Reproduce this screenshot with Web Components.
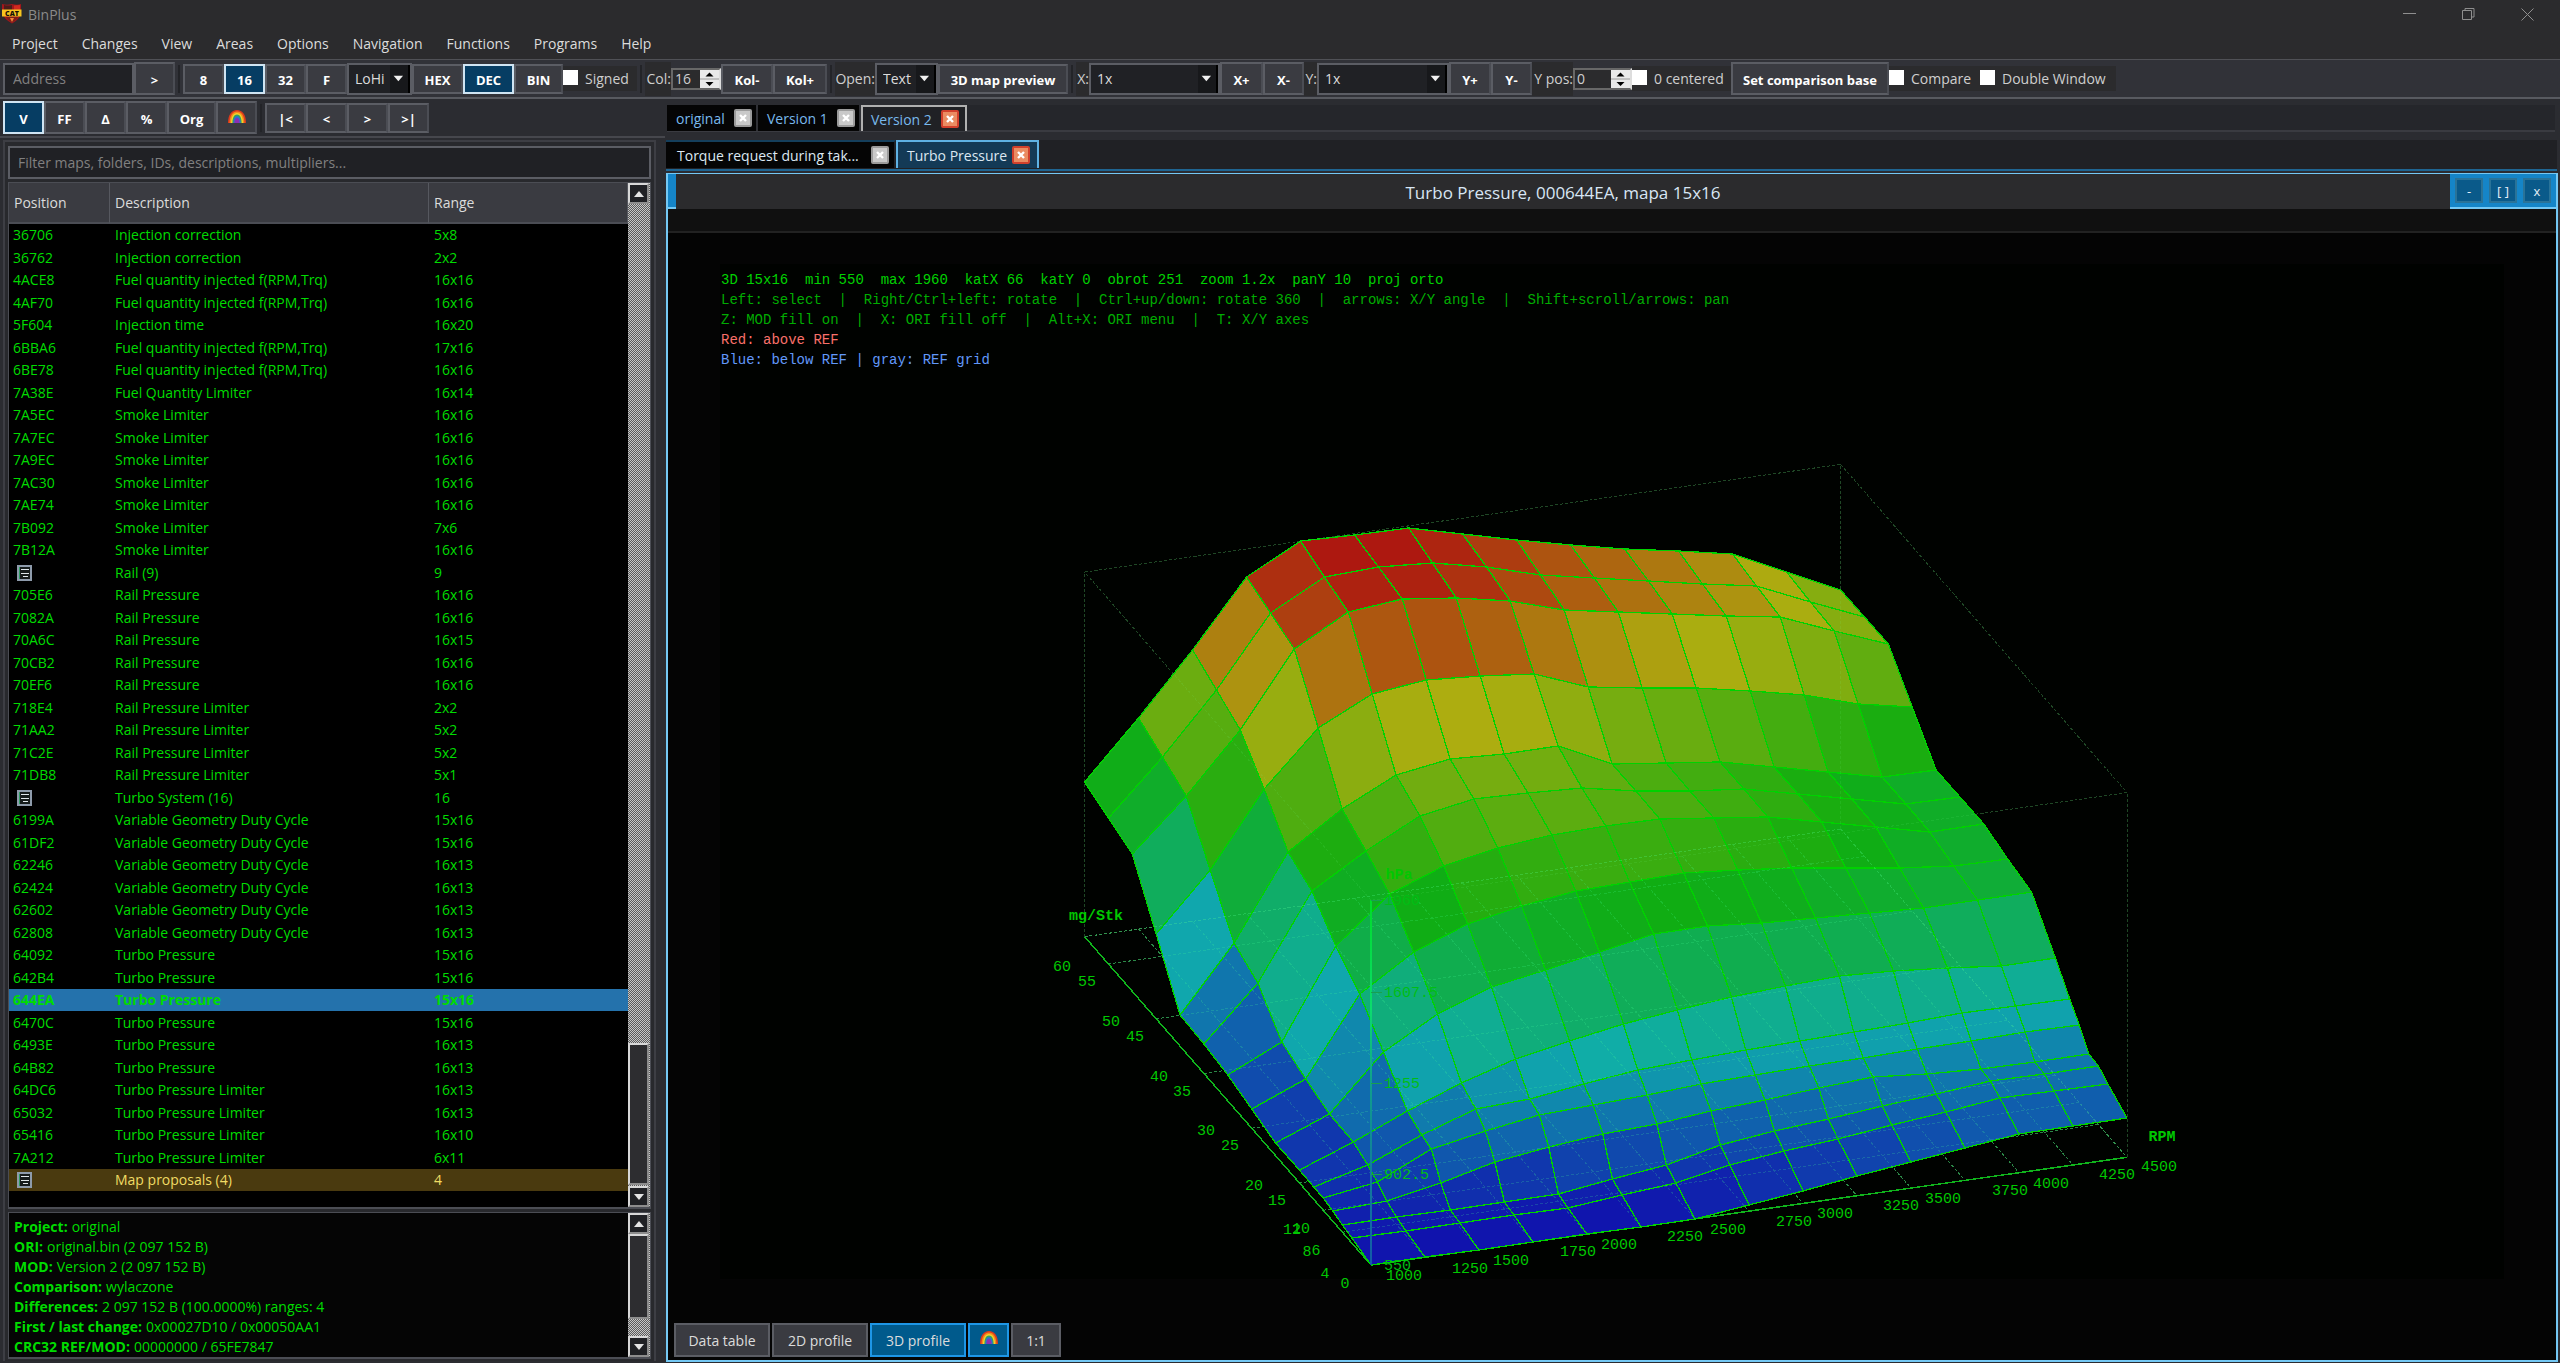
<!DOCTYPE html>
<html lang="en">
<head>
<meta charset="utf-8">
<title>BinPlus</title>
<style>
html,body{margin:0;height:100%;background:#2b2b2d}
body{font-family:"Open Sans","Noto Sans",sans-serif;font-size:14px;color:#dcdcdc;overflow:hidden}
</style>
</head>
<body>
<bin-app></bin-app>
<script>
const define=(name,markup,setup)=>customElements.define(name,class extends HTMLElement{
  connectedCallback(){
    if(this.shadowRoot)return;
    const root=this.attachShadow({mode:'open'});
    root.innerHTML='<style>*{box-sizing:border-box}button,input,select{font:inherit;color:inherit;margin:0}</style>'+(typeof markup==='function'?markup(this):markup);
    if(setup)setup(this,root);
  }
});

/* ---------- small pictures ---------- */
define('rainbow-icon',`<style>:host{display:block;width:18px;height:18px}svg{display:block}</style>
<svg width="18" height="13" viewBox="0 0 18 13">
<path d="M0 13C0 5 3.500 0 9 0s9 5 9 13Z" fill="#dd3a1c"/>
<path d="M1.600 13C1.600 6 4.500 1.600 9 1.600s7.400 4.400 7.400 11.400Z" fill="#f58a1c"/>
<path d="M3 13C3 7 5.300 3 9 3s6 4 6 10Z" fill="#f4d42c"/>
<path d="M4.400 13C4.400 8 6 4.600 9 4.600s4.600 3.400 4.600 8.400Z" fill="#35a45a"/>
<path d="M5.400 13C5.400 9 6.700 6 9 6s3.600 3 3.600 7Z" fill="#2f6fd0"/>
<path d="M6.400 13C6.400 10 7.300 8 9 8s2.600 2 2.600 5Z" fill="#8a2fb4"/>
</svg>`);

define('shield-logo',`<style>:host{display:block;width:20px;height:20px}svg{display:block}text{font:800 7px "Open Sans",sans-serif}</style>
<svg width="20" height="20" viewBox="0 0 20 20">
<path d="M0 0Q5 1.500 10 0Q15 1.500 19 0V9Q18 15 10 19.500Q2 15 0 9Z" fill="#a3161c"/>
<path d="M2 1Q6 2 10 1V6H2Z" fill="#4a1d1a"/><path d="M12 1.500l6-.5v5h-6Z" fill="#d22a20"/>
<path d="M4 13h12l-3 3.500-3 2-3-2Z" fill="#7c2018"/><path d="M8 14h4l-2 4Z" fill="#f4863a"/>
<path d="M0 5.500H19.500V12.500H0Z" fill="#f7c51e"/>
<text x="10" y="11.500" text-anchor="middle" fill="#15110a">CAT</text>
</svg>`);

define('sheet-icon',`<style>:host{display:block;width:15px;height:16px}svg{display:block}</style>
<svg width="15" height="16" viewBox="0 0 15 16" shape-rendering="crispEdges">
<rect x="1" y="1" width="13" height="14" fill="#161c1c" stroke="#8e9bab" stroke-width="2"/>
<path d="M2.500 2v12" stroke="#2f9a62"/><path d="M4 4.500h8M4 8.500h8M6 11.500h5" stroke="#dfe6ea"/>
</svg>`);

/* ---------- controls ---------- */
define('tool-button',h=>`<style>
:host{display:block;flex:none;width:${h.getAttribute('w')}px;height:30px}
:host([tall]){height:33px}:host([nav]){height:30px}
button{display:flex;align-items:center;justify-content:center;width:100%;height:100%;padding:2px 0 0;background:#3a3b41;border:2px solid #5b5d64;border-right-color:#4b4d54;color:#fff;font-weight:700;font-size:13px;line-height:18px;white-space:nowrap}
:host([active]) button{background:#063d63;border-color:#cfe4f2}
</style><button type="button" aria-label="${h.getAttribute('label')||h.textContent}"><slot></slot></button>`);

define('drop-down',h=>`<style>
:host{display:block;flex:none;width:${h.getAttribute('w')}px;height:32px}
.box{display:grid;grid-template-columns:1fr 20px;height:100%;border:2px solid #5b5d64;background:#202125}
select{grid-area:1/1/2/3;appearance:none;border:0;background:none;padding:0 0 0 6px;outline:0;width:100%;height:100%;color:#dcdcdc;z-index:1}
svg{grid-area:1/2;width:20px;height:100%;background:#17181b;border-right:2px solid #000}
</style><div class="box"><svg viewBox="0 0 20 28"><path d="M4 10.500h10.500l-5.200 6Z" fill="#f0f0f0"/></svg><select aria-label="${h.getAttribute('label')}"><option>${h.getAttribute('value')}</option></select></div>`);

define('spin-box',h=>`<style>
:host{display:block;flex:none;width:${h.getAttribute('w')}px;height:22px}
.box{display:flex;height:100%;border:2px solid #686868;border-right-color:#ddd;background:#2b2b2d}
input{flex:1;width:0;border:0;background:none;padding:0 0 0 2px;outline:0;color:#cfcfcf}
svg{width:19px;height:18px;background:#e9e9e9}
</style><div class="box"><input type="text" aria-label="${h.getAttribute('label')}" value="${h.getAttribute('value')}">
<svg viewBox="0 0 19 18"><path d="M0 9h19" stroke="#9a9a9a"/><path d="M5.500 6.500h8L9.500 2.500ZM5.500 12h8l-4 4Z" fill="#000"/></svg></div>`);

define('check-option',`<style>
:host{display:block;flex:none;background:#2b2b2d;height:25px}
label{display:flex;align-items:center;height:100%;color:#cfcfcf;white-space:nowrap}
input{appearance:none;width:15px;height:15px;background:#fff;margin:0 7px 3px 0}
</style><label><input type="checkbox"><span><slot></slot></span></label>`);

define('tool-label',`<style>:host{display:flex;flex:none;align-items:center;justify-content:flex-end;height:34px;background:#2b2b2d;color:#cfcfcf;white-space:nowrap}</style><slot></slot>`);
define('tool-rule',`<style>:host{display:block;flex:none;width:2px;height:28px;background:#232428;margin:0 3px}</style>`);

define('close-mark',`<style>
:host{display:block;flex:none;width:18px;height:18px}
button{display:block;width:18px;height:18px;padding:0;border:2px solid #9b9b9b;border-radius:2px;background:#c9c9c9}
svg{display:block}
:host([hot]) button{background:#ea8c62;border-color:#d2402c}
</style><button type="button" aria-label="Close tab"><svg width="14" height="14" viewBox="0 0 14 14"><path d="M4 4l6 6M10 4l-6 6" stroke="#fff" stroke-width="2.400"/></svg></button>`);

define('file-tab',`<style>
:host{display:flex;flex:none;align-items:center;height:26px;padding:0 4px 0 9px;background:#050505;border-right:2px solid #303136;color:#79b9ec;white-space:nowrap;box-sizing:border-box}
a{color:inherit;text-decoration:none;flex:1}
:host([active]){background:#202125;border:2px solid #b0b0b0;border-bottom:0;padding:0 6px 0 8px}
:host([map]){height:28px;padding:0 5px 0 11px;color:#dce8f2;border:0;border-right:2px solid #202125;border-top:2px solid #153f5c}
:host([map][active]){background:#143a56;padding:0 7px 0 9px;border:2px solid #5fb2e4;border-bottom:0}
</style><a href="#"><slot></slot></a><slot name="x"></slot>`);

define('scroll-rail',`<style>
:host{display:flex;flex-direction:column;width:22px;flex:none;background:conic-gradient(#c8c8c8 25%,#5c5c5c 0 50%,#c8c8c8 0 75%,#5c5c5c 0) 0 0/2px 2px}
button{width:21px;height:21px;flex:none;padding:0;border:2px solid #d8d8d8;border-right-color:#8d8d8d;border-bottom-color:#8d8d8d;background:#202125}
svg{display:block;margin:auto}
.before{flex:var(--before)}.after{flex:var(--after)}
.thumb{flex:var(--thumb);width:21px;border:2px solid #d8d8d8;border-right-color:#8d8d8d;border-bottom-color:#8d8d8d;background:#2d2d30}
</style><button type="button" aria-label="Scroll up"><svg width="10" height="6"><path d="M0 6h10L5 0Z" fill="#e4e4e4"/></svg></button>
<div class="before"></div><div class="thumb"></div><div class="after"></div>
<button type="button" aria-label="Scroll down"><svg width="10" height="6"><path d="M0 0h10L5 6Z" fill="#e4e4e4"/></svg></button>`);

/* ---------- header ---------- */
define('title-bar',`<style>
:host{display:flex;align-items:center;height:30px;padding:0 26px 2px 2px;color:#8a8a8a;gap:6px;box-sizing:border-box}
h1{font:inherit;font-size:14px;margin:0;flex:1}
nav{display:flex;gap:46px}
button{border:0;background:none;padding:0;width:13px;height:14px}svg{display:block}
</style><shield-logo></shield-logo><h1>BinPlus</h1>
<nav><button aria-label="Minimize"><svg width="13" height="14"><path d="M0 6.500h13" stroke="#8f8f8f"/></svg></button>
<button aria-label="Restore"><svg width="13" height="14" fill="none" stroke="#8f8f8f"><path d="M.5 3.500h9v9h-9ZM3 3V1.500h9V10h-2"/></svg></button>
<button aria-label="Close"><svg width="13" height="14"><path d="M.5 1.500l12 12M12.500 1.500l-12 12" stroke="#8f8f8f"/></svg></button></nav>`);

define('menu-bar',`<style>
:host{display:flex;align-items:center;gap:24px;height:30px;padding:0 12px 2px;border-bottom:1px solid #505156;box-sizing:border-box}
a{color:#dcdcdc;text-decoration:none}
</style>`+['Project','Changes','View','Areas','Options','Navigation','Functions','Programs','Help'].map(t=>`<a href="#">${t}</a>`).join(''));

define('main-tools',`<style>
:host{display:flex;align-items:center;height:39px;padding:0 3px;background:#313238;border-bottom:2px solid #585a60;box-sizing:border-box}
.address{flex:none;width:131px;height:32px;padding:0 8px;background:#202125;border:2px solid #5b5d64;outline:0}
.address::placeholder{color:#808080;opacity:1}
</style>
<input class="address" placeholder="Address" aria-label="Address"><tool-button w="41" tall>&gt;</tool-button><tool-rule></tool-rule>
<tool-button w="41">8</tool-button><tool-button w="41" active>16</tool-button><tool-button w="41">32</tool-button><tool-button w="41">F</tool-button>
<drop-down w="65" value="LoHi" label="Byte order"></drop-down>
<tool-button w="51">HEX</tool-button><tool-button w="51" active>DEC</tool-button><tool-button w="49">BIN</tool-button>
<check-option style="width:74px">Signed</check-option><tool-rule></tool-rule>
<tool-label style="width:26px">Col:</tool-label><spin-box w="50" value="16" label="Columns"></spin-box>
<tool-button w="52">Kol-</tool-button><tool-button w="54">Kol+</tool-button><tool-rule></tool-rule>
<tool-label style="width:40px">Open:</tool-label><drop-down w="63" value="Text" label="Open as"></drop-down>
<tool-button w="130">3D map preview</tool-button><tool-rule></tool-rule>
<tool-label style="width:13px">X:</tool-label><drop-down w="131" value="1x" label="X zoom"></drop-down>
<tool-button w="43" tall>X+</tool-button><tool-button w="41" tall>X-</tool-button>
<tool-label style="width:13px">Y:</tool-label><drop-down w="132" value="1x" label="Y zoom"></drop-down>
<tool-button w="42" tall>Y+</tool-button><tool-button w="41" tall>Y-</tool-button>
<tool-label style="width:41px">Y pos:</tool-label><spin-box w="59" value="0" label="Y position"></spin-box>
<check-option style="width:99px">0 centered</check-option>
<tool-button w="158" tall>Set comparison base</tool-button>
<check-option style="width:91px">Compare</check-option><check-option style="width:136px">Double Window</check-option>`);

define('view-tools',`<style>
:host{display:flex;align-items:center;height:39px;padding:0 3px;background:#2b2c31;border-bottom:2px solid #46474d;box-sizing:border-box}
tool-button:not([nav]){height:33px}
</style>
<tool-button w="41" active>V</tool-button><tool-button w="41">FF</tool-button><tool-button w="41">Δ</tool-button><tool-button w="41">%</tool-button><tool-button w="49">Org</tool-button><tool-button w="41" label="Colours"><rainbow-icon></rainbow-icon></tool-button><tool-rule></tool-rule>
<tool-button w="41" nav>|&lt;</tool-button><tool-button w="41" nav>&lt;</tool-button><tool-button w="41" nav>&gt;</tool-button><tool-button w="41" nav>&gt;|</tool-button>`);

/* ---------- map list ---------- */
const F='Fuel quantity injected f(RPM,Trq)',S='Smoke Limiter',R='Rail Pressure',L='Rail Pressure Limiter',V='Variable Geometry Duty Cycle',T='Turbo Pressure',U='Turbo Pressure Limiter';
const maps=[['36706','Injection correction','5x8'],['36762','Injection correction','2x2'],['4ACE8',F,'16x16'],['4AF70',F,'16x16'],['5F604','Injection time','16x20'],['6BBA6',F,'17x16'],['6BE78',F,'16x16'],['7A38E','Fuel Quantity Limiter','16x14'],['7A5EC',S,'16x16'],['7A7EC',S,'16x16'],['7A9EC',S,'16x16'],['7AC30',S,'16x16'],['7AE74',S,'16x16'],['7B092',S,'7x6'],['7B12A',S,'16x16'],['','Rail (9)','9'],['705E6',R,'16x16'],['7082A',R,'16x16'],['70A6C',R,'16x15'],['70CB2',R,'16x16'],['70EF6',R,'16x16'],['718E4',L,'2x2'],['71AA2',L,'5x2'],['71C2E',L,'5x2'],['71DB8',L,'5x1'],['','Turbo System (16)','16'],['6199A',V,'15x16'],['61DF2',V,'15x16'],['62246',V,'16x13'],['62424',V,'16x13'],['62602',V,'16x13'],['62808',V,'16x13'],['64092',T,'15x16'],['642B4',T,'15x16'],['644EA',T,'15x16','selected'],['6470C',T,'15x16'],['6493E',T,'16x13'],['64B82',T,'16x13'],['64DC6',U,'16x13'],['65032',U,'16x13'],['65416',U,'16x10'],['7A212',U,'6x11'],['','Map proposals (4)','4','proposal']];
define('map-list',`<style>
:host{display:flex;flex:1;min-height:0;border:1px solid #4b4d54;border-bottom-width:2px;background:#000;box-sizing:border-box}
.view{flex:1;overflow:hidden}
table{width:100%;border-collapse:separate;border-spacing:0;table-layout:fixed;color:#00dc00}
th{height:41px;padding:0 0 0 5px;text-align:left;font-weight:400;color:#dcdcdc;background:#3a3b41;border-right:1px solid #56585f;border-bottom:2px solid #4b4d54}
td{padding:0 0 0 4px;height:22px;line-height:22px;white-space:nowrap;overflow:hidden}
tr:nth-child(even) td{height:23px;line-height:23px}
th:nth-child(1){width:101px}th:nth-child(2){width:319px}
td:nth-child(2),td:nth-child(3){padding-left:5px}
.selected td{background:#2472ac;font-weight:700}
.proposal td{background:#4a3a0f;color:#f0dc64}
sheet-icon{margin-left:4px}
</style><div class="view"><table><thead><tr><th>Position</th><th>Description</th><th>Range</th></tr></thead><tbody>${maps.map(m=>`<tr class="${m[3]||''}"><td>${m[0]||'<sheet-icon></sheet-icon>'}</td><td>${m[1]}</td><td>${m[2]}</td></tr>`).join('')}</tbody></table></div>
<scroll-rail style="--before:845;--thumb:139;--after:1"></scroll-rail>`);

define('project-info',`<style>
:host{display:flex;height:147px;flex:none;border:1px solid #4b4d54;border-bottom-width:2px;background:#050505;color:#00dc00;overflow:hidden;box-sizing:border-box}
dl{flex:1;margin:0;padding:4px 0 0 5px;line-height:20px}
div{display:flex;gap:4px;height:20px;white-space:nowrap}dt{font-weight:700}dd{margin:0}
</style><dl>${[['Project:','original'],['ORI:','original.bin (2 097 152 B)'],['MOD:','Version 2 (2 097 152 B)'],['Comparison:','wylaczone'],['Differences:','2 097 152 B (100.0000%) ranges: 4'],['First / last change:','0x00027D10 / 0x00050AA1'],['CRC32 REF/MOD:','00000000 / 65FE7847']].map(r=>`<div><dt>${r[0]}</dt><dd>${r[1]}</dd></div>`).join('')}</dl>
<scroll-rail style="--before:0;--thumb:84;--after:18"></scroll-rail>`);

define('side-panel',`<style>
:host{display:flex;flex-direction:column;width:665px;flex:none}
.body{flex:1;min-height:0;display:flex;flex-direction:column;gap:3px;margin:2px 9px 2px 3px;padding:4px 3px 2px;border:2px solid #3d3e44;border-bottom:0;background:#28292d}
input{width:100%;height:33px;flex:none;padding:0 8px;background:#202125;border:2px solid #5b5d64;outline:0;color:#dcdcdc}
input::placeholder{color:#808080;opacity:1}
</style><view-tools></view-tools><div class="body"><input placeholder="Filter maps, folders, IDs, descriptions, multipliers..." aria-label="Filter maps"><map-list></map-list><project-info></project-info></div>`);

/* ---------- 3D surface ---------- */
const load=[60,55,50,45,40,35,30,25,20,15,12,10,8,6,4,0];
/* one line per load value, one plotted height per RPM column */
const ridge=[
[782,718,650,577,541,535,528,534,540,545,549,551,554,572,590],
[818,757,690,613,577,567,563,567,575,578,581,584,586,602,617],
[854,796,730,649,612,599,598,601,610,612,614,616,617,631,644],
[934,870,789,728,694,680,676,674,687,688,688,691,695,704,707],
[1015,943,852,809,775,759,754,746,764,763,762,767,772,777,770],
[1044,983,891,851,816,799,793,788,791,791,789,794,799,804,797],
[1075,1042,946,894,866,848,835,826,819,818,817,822,827,832,824],
[1109,1079,994,952,924,906,891,882,873,870,868,868,868,866,859],
[1143,1114,1052,1014,987,970,952,934,926,923,918,913,908,900,892],
[1170,1142,1111,1083,1059,1041,1024,1010,997,986,976,971,968,966,958],
[1187,1165,1135,1109,1099,1084,1070,1060,1050,1041,1032,1023,1013,1006,999],
[1198,1182,1149,1131,1115,1105,1095,1084,1075,1066,1058,1049,1041,1032,1025],
[1211,1201,1183,1162,1147,1134,1124,1111,1100,1088,1077,1074,1069,1062,1054],
[1225,1217,1210,1202,1194,1179,1165,1145,1131,1119,1106,1094,1081,1074,1066],
[1238,1231,1223,1215,1208,1195,1183,1165,1151,1139,1125,1112,1098,1091,1084],
[1265,1257,1250,1242,1234,1227,1219,1205,1191,1176,1162,1148,1134,1126,1118]];
const px=(i,v)=>1371+54*i-4.773*v, floorY=(i,v)=>1265-7.69*i-5.472*v, H=364.7;
const line=(i,v,k,w,a=0,b=0)=>`M${px(i,v).toFixed(1)} ${(floorY(i,v)-a).toFixed(1)}L${px(k,w).toFixed(1)} ${(floorY(k,w)-b).toFixed(1)}`;
const surface=()=>{
  let s='';
  for(let j=0;j<15;j++)for(let i=0;i<14;i++){
    const c=[[i,j],[i+1,j],[i+1,j+1],[i,j+1]];
    const t=c.reduce((n,[a,b])=>n+(floorY(a,load[b])-ridge[b][a])/H,0)/4;
    const hue=Math.round(240*(1-Math.max(0,Math.min(1,t))));
    s+=`<path d="M${c.map(([a,b])=>px(a,load[b]).toFixed(1)+' '+ridge[b][a]).join('L')}Z" fill="hsl(${hue} 83% 37%)"/>`;
  }
  return s;
};
const grid=()=>{
  let d='';
  for(const v of [60,55,45,35,25,15,10,6])d+=line(0,v,14,v);
  for(let i=1;i<15;i++)d+=line(i,60,i,0);
  return d;
};
const box=line(0,60,14,60,H,H)+line(14,60,14,0,H,H)+line(14,0,0,0,H,H)+line(0,0,0,60,H,H)+line(0,60,0,60,0,H)+line(14,60,14,60,0,H)+line(14,0,14,0,0,H)+line(0,60,14,60)+line(14,60,14,0);
const label=(x,y,t,c='')=>`<text class="${c}" x="${x}" y="${y+5}">${t}</text>`;
const marks=[[1062,966,60],[1087,981,55],[1111,1021,50],[1135,1036,45],[1159,1076,40],[1182,1091,35],[1206,1130,30],[1230,1145,25],[1254,1185,20],[1277,1200,15],[1292,1229,12],[1301,1228,10],[1307,1251,8],[1316,1250,6],[1325,1273,4],[1345,1283,0],[1404,1275,1000],[1470,1268,1250],[1511,1260,1500],[1578,1251,1750],[1619,1244,2000],[1685,1236,2250],[1728,1229,2500],[1794,1221,2750],[1835,1213,3000],[1901,1205,3250],[1943,1198,3500],[2010,1190,3750],[2051,1183,4000],[2117,1174,4250],[2159,1166,4500]];
define('surface-plot',`<style>
:host{display:block;min-height:0}
svg{display:block;width:100%;height:100%;overflow:visible}
text{font:15px "Liberation Mono",monospace;fill:#00c800;text-anchor:middle;white-space:pre}
.b{font-weight:700}.z{text-anchor:start;fill:#00be14}.h{font-size:14px;text-anchor:start;fill:#00d200}.d{fill:#00ac00}.r{fill:#f8706a}.u{fill:#6298fa}
.l{fill:none;stroke-width:1}
</style><svg viewBox="720 264 1784 1015" role="img" aria-label="Turbo pressure surface over RPM and mg/Stk">
<defs><linearGradient id="mast" gradientUnits="userSpaceOnUse" x1="0" y1="900" x2="0" y2="1265"><stop offset="0" stop-color="#00dc28"/><stop offset=".3" stop-color="#0cdc6e"/><stop offset=".5" stop-color="#10a08c"/><stop offset="1" stop-color="#125aa8"/></linearGradient></defs>
<rect x="720" y="264" width="1784" height="1015" fill="#000200"/>
<g class="l" shape-rendering="crispEdges">
<path d="${box}" stroke="#163319" stroke-dasharray="3 2"/>
<path d="${grid()}" stroke="#256b34" stroke-dasharray="3 2"/>
<path d="${line(0,0,14,0)+line(0,0,0,60)}" stroke="#10b41c" stroke-width="1.500"/>
<g stroke="#00d200" stroke-width="1.300" stroke-linejoin="round">${surface()}</g>
<path d="${grid()}" stroke="#46ff96" stroke-opacity=".2" stroke-dasharray="3 2"/>
<path d="${box}" stroke="#78ff96" stroke-opacity=".1" stroke-dasharray="3 2"/>
<rect x="1370" y="900" width="2" height="365" fill="url(#mast)"/>
<path d="M1371 900h11M1371 992h11M1371 1083h11M1371 1174h11" stroke="#18a050"/>
</g>
${marks.map(m=>label(...m)).join('')}
${label(1096,915,'mg/Stk','b')}${label(2162,1136,'RPM','b')}${label(1399,874,'hPa','b')}
${label(1384,900,'1960','z')}${label(1384,992,'1607.5','z')}${label(1384,1083,'1255','z')}${label(1384,1174,'902.5','z')}${label(1384,1265,'550','z')}
${label(721,279,'3D 15x16  min 550  max 1960  katX 66  katY 0  obrot 251  zoom 1.2x  panY 10  proj orto','h')}
${label(721,299,'Left: select  |  Right/Ctrl+left: rotate  |  Ctrl+up/down: rotate 360  |  arrows: X/Y angle  |  Shift+scroll/arrows: pan','h d')}
${label(721,319,'Z: MOD fill on  |  X: ORI fill off  |  Alt+X: ORI menu  |  T: X/Y axes','h d')}
${label(721,339,'Red: above REF','h r')}
${label(721,359,'Blue: below REF | gray: REF grid','h u')}
</svg>`);

define('mode-button',`<style>
:host{display:block;width:96px;height:34px}
button{display:flex;align-items:center;justify-content:center;width:100%;height:100%;padding:0;background:#3a3b41;border:2px solid #5b5d64;color:#dcdcdc}
:host([active]) button{background:#005a8c;border-color:#1e96e6}
</style><button type="button"><slot></slot></button>`);

define('map-window',`<style>
:host{display:flex;flex-direction:column;flex:1;min-height:0;margin:2px 2px 1px 1px;border:2px solid #74c8f4;border-top-width:1px;background:#040404;box-sizing:border-box}
header{display:flex;height:35px;background:#2b2b2d}
.grip{width:8px;background:#1585c8;border-bottom:2px solid #74c8f4}
h2{flex:1;margin:0;text-align:center;font:inherit;font-size:17px;line-height:38px;color:#d8e6f4}
nav{display:flex;gap:6px;padding:4px 5px 0;background:#1585c8;border-bottom:2px solid #74c8f4}
nav button{width:28px;height:25px;padding:0;border:2px solid #2a7398;background:#0a5a8a;color:#e6f0f8;font-size:13px;line-height:16px}
.strip{height:24px;background:#101010;border-bottom:2px solid #222}
main{flex:1;min-height:0;padding:31px 52px 44px;display:flex}
surface-plot{flex:1}
footer{display:flex;gap:2px;padding:0 6px 3px}
.s{width:41px}.m{width:50px}
</style><header><div class="grip"></div><h2>Turbo Pressure, 000644EA, mapa 15x16</h2><nav><button type="button">-</button><button type="button">[ ]</button><button type="button">x</button></nav></header>
<div class="strip"></div><main><surface-plot></surface-plot></main>
<footer><mode-button>Data table</mode-button><mode-button>2D profile</mode-button><mode-button active>3D profile</mode-button><mode-button class="s" active><rainbow-icon></rainbow-icon></mode-button><mode-button class="m">1:1</mode-button></footer>`);

define('work-area',`<style>
:host{display:flex;flex-direction:column;flex:1;min-width:0}
.files{display:flex;height:27px;margin:6px 5px 8px 2px;background:#25262b;border-bottom:2px solid #3a3b41}
.maps{display:flex;height:31px;margin:0 3px 0 1px;background:#202125;border-bottom:2px solid #1f6592}
h2{padding:0}
</style><div class="files"><file-tab style="width:91px">original<close-mark slot="x"></close-mark></file-tab><file-tab style="width:103px">Version 1<close-mark slot="x"></close-mark></file-tab><file-tab active style="width:106px">Version 2<close-mark slot="x" hot></close-mark></file-tab></div>
<div class="maps"><file-tab map style="width:230px">Torque request during tak...<close-mark slot="x"></close-mark></file-tab><file-tab map active style="width:143px">Turbo Pressure<close-mark slot="x" hot></close-mark></file-tab></div>
<map-window></map-window>`);

define('bin-app',`<style>
:host{display:flex;flex-direction:column;height:100vh;background:#2b2b2d}
.work{flex:1;min-height:0;display:flex;background:#2b2c31}
</style><title-bar></title-bar><menu-bar></menu-bar><main-tools></main-tools><div class="work"><side-panel></side-panel><work-area></work-area></div>`);
</script>
</body>
</html>
